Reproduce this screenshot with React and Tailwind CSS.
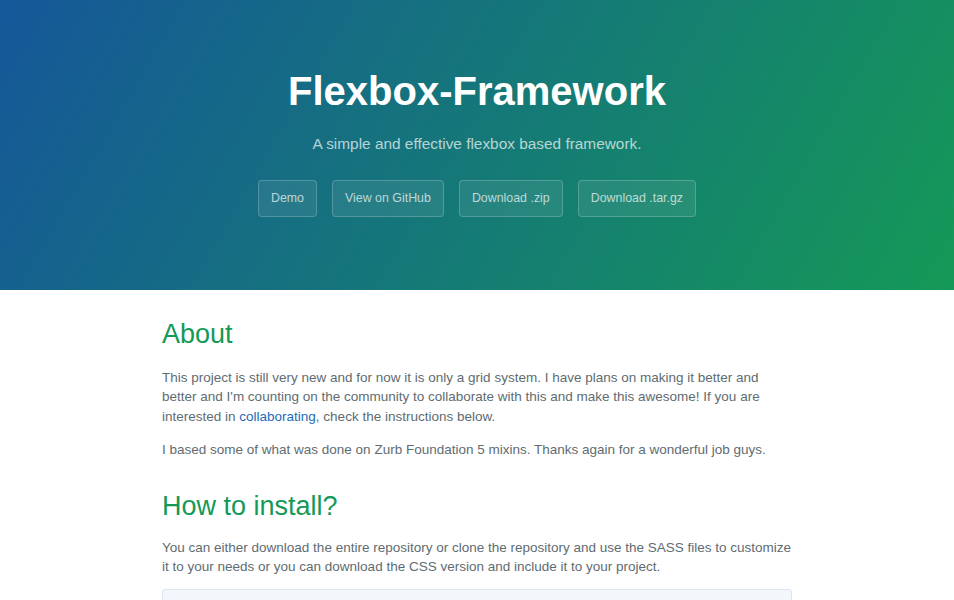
export default function App() {
  const buttons = ['Demo', 'View on GitHub', 'Download .zip', 'Download .tar.gz'];

  return (
    <div className="min-h-screen bg-white font-['Liberation_Sans',Arial,sans-serif]">
      <section className="h-[290px] bg-[linear-gradient(120deg,#155799,#159957)] text-center text-white flex flex-col items-center pt-[67px]">
        <h1 className="text-[40px] font-bold leading-[1.2]">Flexbox-Framework</h1>
        <h2 className="mt-[17px] text-[15.4px] font-normal text-white/70">
          A simple and effective flexbox based framework.
        </h2>
        <div className="mt-[25px] flex gap-[15px]">
          {buttons.map((b) => (
            <a
              key={b}
              href="#"
              className="h-[37px] px-[12px] flex items-center rounded-[4px] border border-white/20 bg-white/[0.08] text-[12.4px] text-white/70"
            >
              {b}
            </a>
          ))}
        </div>
      </section>

      <main className="w-[630px] mx-auto pt-[28px] text-[#606c71] text-[13.5px] leading-[19.5px]">
        <h1 className="text-[27px] leading-[1.25] text-[#159957] font-normal">About</h1>
        <p className="mt-[16px]">
          This project is still very new and for now it is only a grid system. I have plans on making it better and
          better and I'm counting on the community to collaborate with this and make this awesome! If you are
          interested in <a href="#" className="text-[#1e6bb8]">collaborating</a>, check the instructions below.
        </p>
        <p className="mt-[14px]">
          I based some of what was done on Zurb Foundation 5 mixins. Thanks again for a wonderful job guys.
        </p>
        <h1 className="mt-[30px] text-[27px] leading-[1.25] text-[#159957] font-normal">How to install?</h1>
        <p className="mt-[14px]">
          You can either download the entire repository or clone the repository and use the SASS files to customize
          it to your needs or you can download the CSS version and include it to your project.
        </p>
        <pre className="mt-[12px] h-[80px] bg-[#f3f6fa] border border-[#dce6f0] rounded-[3px]"></pre>
      </main>
    </div>
  );
}
